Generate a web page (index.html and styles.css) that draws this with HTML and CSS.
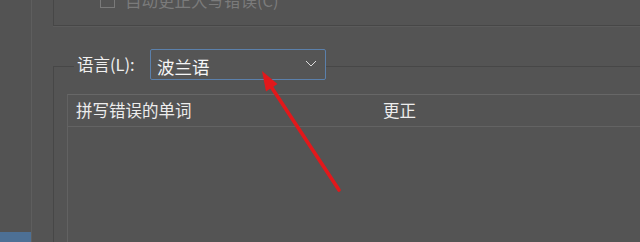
FILE: index.html
```html
<!DOCTYPE html>
<html lang="zh-CN">
<head>
<meta charset="utf-8">
<title>拼写检查</title>
<link rel="stylesheet" href="styles.css">
</head>
<body>
<div class="window">
  <aside class="sidebar">
    <div class="sidebar-fill"></div>
    <div class="sidebar-selected"></div>
  </aside>
  <main class="main">
    <div class="group group-top">
      <div class="check-row">
        <span class="checkbox"></span>
        <span class="check-label">自动更正大写错误(C)</span>
      </div>
    </div>
    <fieldset class="group group-lang">
      <legend class="lang-legend">
        <span class="lang-label">语言(L):</span>
        <span class="combo">
          <span class="combo-text">波兰语</span>
          <svg class="combo-chevron" width="12" height="7" viewBox="0 0 12 7"><path d="M1 1 L6 6 L11 1" fill="none" stroke="#dcdcdc" stroke-width="1"/></svg>
        </span>
      </legend>
      <div class="listview">
        <div class="list-header">
          <div class="col col-word">拼写错误的单词</div>
          <div class="col col-fix">更正</div>
        </div>
        <div class="list-body"></div>
      </div>
    </fieldset>
  </main>
  <svg class="annotation" width="640" height="242" viewBox="0 0 640 242">
    <line x1="339" y1="190" x2="270" y2="85" stroke="#e2181b" stroke-width="3.6" stroke-linecap="round"/>
    <polygon points="262,71 277.5,84 266,91.5" fill="#e2181b"/>
  </svg>
</div>
</body>
</html>
```

FILE: styles.css
```css
html, body {
  margin: 0;
  padding: 0;
  background: #545454;
}

body {
  font-family: "Noto Sans CJK SC", "Noto Sans", sans-serif;
  color: #efefef;
}

.window {
  position: relative;
  width: 640px;
  height: 242px;
  overflow: hidden;
  display: flex;
  background: #545454;
}

.sidebar {
  width: 31px;
  flex: none;
  border-right: 1px solid #5e5e5e;
  display: flex;
  flex-direction: column;
  background: #535353;
}

.sidebar-fill {
  flex: 1;
}

.sidebar-selected {
  height: 10px;
  background: #4d7095;
}

.main {
  flex: 1;
  min-width: 0;
  padding-left: 21px;
  overflow: hidden;
}

.group-top {
  width: 640px;
  height: 40px;
  margin-top: -14px;
  box-sizing: border-box;
  border: 1px solid #474747;
  border-top: none;
  box-shadow: 0 1px 0 #5b5b5b;
}

.check-row {
  display: flex;
  align-items: center;
  gap: 10px;
  padding-left: 46px;
  padding-top: 3px;
  height: 22px;
}

.checkbox {
  width: 15px;
  height: 15px;
  box-sizing: border-box;
  border: 1px solid #7a7a7a;
}

.check-label {
  font-size: 16.5px;
  line-height: 22px;
  color: #7b7b7b;
}

.group-lang {
  width: 640px;
  height: 260px;
  margin: 23px 0 0 0;
  padding: 0 0 0 20px;
  border: 1px solid #474747;
  min-width: 0;
  box-sizing: border-box;
}

.lang-legend {
  padding: 0 0 0 3px;
  height: 34px;
  display: flex;
  align-items: flex-start;
}

.lang-label {
  width: 73px;
  font-size: 16.5px;
  line-height: 34px;
  color: #f0f0f0;
  margin-top: -2px;
}

.combo {
  width: 176px;
  height: 31px;
  box-sizing: border-box;
  border: 1px solid #5b80ab;
  border-radius: 2px;
  display: flex;
  align-items: center;
  justify-content: space-between;
  padding: 0 8px 0 6px;
  background: #555555;
}

.combo-text {
  font-size: 17.5px;
  line-height: 29px;
  color: #f6f6f6;
  margin-top: 3px;
}

.combo-chevron {
  display: block;
  margin-bottom: 2px;
}

.listview {
  margin: 11px 0 0 -7px;
  width: 640px;
  border-top: 1px solid #676767;
  border-left: 1px solid #626262;
}

.list-header {
  display: flex;
  height: 31px;
  border-bottom: 1px solid #636363;
}

.col {
  font-size: 16.5px;
  line-height: 31px;
  color: #ededed;
}

.col-word {
  width: 315px;
  box-sizing: border-box;
  padding-left: 8px;
}

.col-fix {
  flex: 1;
}

.list-body {
  height: 140px;
}

.annotation {
  position: absolute;
  left: 0;
  top: 0;
  pointer-events: none;
}
```
